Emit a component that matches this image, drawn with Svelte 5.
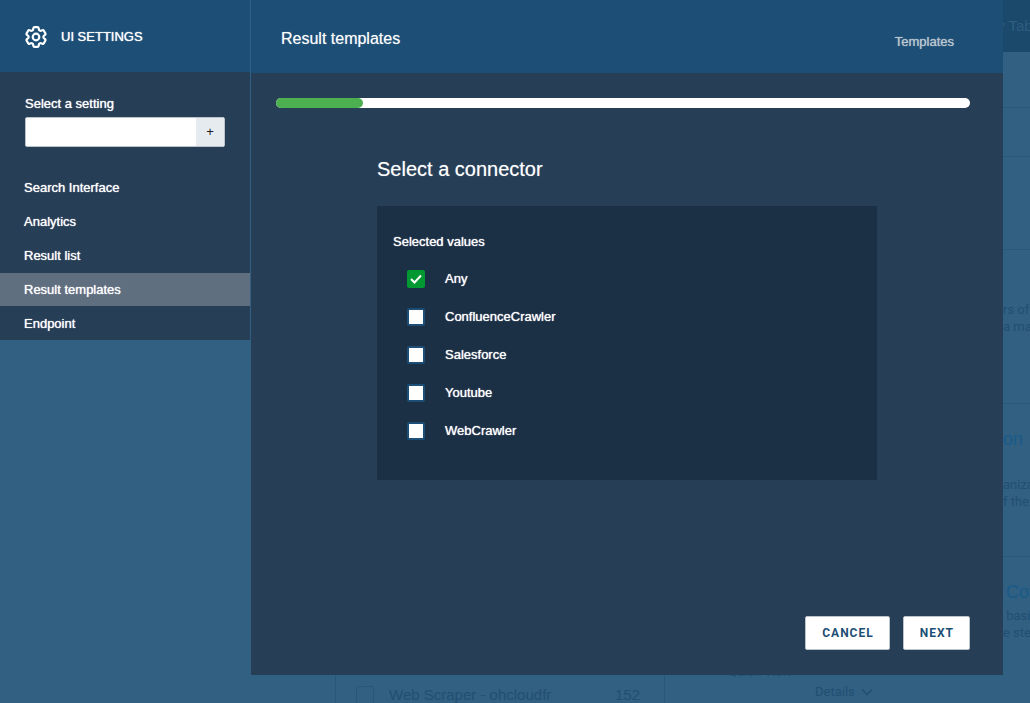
<script lang="ts">
  type Connector = { name: string; checked: boolean };

  const settings = ['Search Interface', 'Analytics', 'Result list', 'Result templates', 'Endpoint'];

  let activeSetting = $state('Result templates');
  let newSetting = $state('');
  let progress = $state(12.5);

  let connectors: Connector[] = $state([
    { name: 'Any', checked: true },
    { name: 'ConfluenceCrawler', checked: false },
    { name: 'Salesforce', checked: false },
    { name: 'Youtube', checked: false },
    { name: 'WebCrawler', checked: false }
  ]);
</script>

<div class="app">
  <!-- search page, dimmed behind the settings -->
  <div class="backdrop" aria-hidden="true">
    <div class="tabs"><span>y</span> Tab</div>
    <div class="search-page">
      <div class="facets">
        <div class="facet">
          <span class="facet-box"></span>
          <span>Web Scraper - ohcloudfr</span>
          <span class="count">152</span>
        </div>
      </div>
      <div class="actions">
        <div class="quick-view">Quick View</div>
        <div class="details">
          Details
          <svg width="12" height="8" viewBox="0 0 12 8" fill="none" stroke="currentColor" stroke-width="1.5">
            <path d="M1 1.5l5 5 5-5" />
          </svg>
        </div>
      </div>
      <div class="results">
        <div class="row toolbar"></div>
        <div class="row sort"></div>
        <div class="row summary"></div>
        <div class="row first"><p>rs of<br />a ma</p></div>
        <div class="row second">
          <h3>on</h3>
          <p>aniza<br />f the</p>
        </div>
        <div class="row third">
          <h3>Cov</h3>
          <p>&nbsp;basi<br />e ste</p>
        </div>
      </div>
    </div>
  </div>

  <div class="overlay">
    <aside class="sidebar">
      <header class="sidebar-header">
        <svg width="22" height="22" viewBox="2 2 20 20" fill="none" stroke="currentColor" stroke-width="2" stroke-linejoin="round">
          <path d="M9.594 3.94c.09-.542.56-.94 1.11-.94h2.593c.55 0 1.02.398 1.11.94l.213 1.281c.063.374.313.686.645.87.074.04.147.083.22.127.325.196.72.257 1.075.124l1.217-.456a1.125 1.125 0 0 1 1.37.49l1.296 2.247a1.125 1.125 0 0 1-.26 1.431l-1.003.827c-.293.241-.438.613-.43.992a7.723 7.723 0 0 1 0 .255c-.008.378.137.75.43.991l1.004.827c.424.35.534.955.26 1.43l-1.298 2.247a1.125 1.125 0 0 1-1.369.491l-1.217-.456c-.355-.133-.75-.072-1.076.124a6.47 6.47 0 0 1-.22.128c-.331.183-.581.495-.644.869l-.213 1.281c-.09.543-.56.94-1.11.94h-2.594c-.55 0-1.019-.398-1.11-.94l-.213-1.281c-.062-.374-.312-.686-.644-.87a6.52 6.52 0 0 1-.22-.127c-.325-.196-.72-.257-1.076-.124l-1.217.456a1.125 1.125 0 0 1-1.369-.49l-1.297-2.247a1.125 1.125 0 0 1 .26-1.431l1.004-.827c.292-.24.437-.613.43-.991a6.932 6.932 0 0 1 0-.255c.007-.38-.138-.751-.43-.992l-1.004-.827a1.125 1.125 0 0 1-.26-1.43l1.297-2.247a1.125 1.125 0 0 1 1.37-.491l1.216.456c.356.133.751.072 1.076-.124.072-.044.146-.086.22-.128.332-.183.582-.495.644-.869l.214-1.28Z" />
          <circle cx="12" cy="12" r="3" />
        </svg>
        <span>UI SETTINGS</span>
      </header>

      <div class="setting-field">
        <label for="setting">Select a setting</label>
        <div class="input-group">
          <input id="setting" type="text" bind:value={newSetting} />
          <button type="button" aria-label="Add setting">+</button>
        </div>
      </div>

      <nav>
        {#each settings as setting}
          <button
            type="button"
            class:active={setting === activeSetting}
            onclick={() => (activeSetting = setting)}
          >{setting}</button>
        {/each}
      </nav>
    </aside>

    <main class="panel">
      <header class="panel-header">
        <h1>Result templates</h1>
        <a href="#templates">Templates</a>
      </header>

      <div class="progress" role="progressbar" aria-label="Progress" aria-valuenow={progress}>
        <div class="progress-bar" style="width: {progress}%"></div>
      </div>

      <section class="step">
        <h2>Select a connector</h2>
        <fieldset>
          <legend>Selected values</legend>
          {#each connectors as connector}
            <label class="option">
              <span class="checkbox">
                <input type="checkbox" bind:checked={connector.checked} />
                {#if connector.checked}
                  <svg width="12" height="10" viewBox="0 0 12 10" fill="none" stroke="#fff" stroke-width="2">
                    <path d="M1 5l3.500 3.500L11 1.500" />
                  </svg>
                {/if}
              </span>
              {connector.name}
            </label>
          {/each}
        </fieldset>
      </section>

      <footer>
        <button type="button">CANCEL</button>
        <button type="button">NEXT</button>
      </footer>
    </main>
  </div>
</div>

<style>
  :global(body) {
    margin: 0;
  }

  .app {
    position: relative;
    min-height: 100vh;
    overflow: hidden;
    background: #316082;
    color: #fff;
    font-family: 'Liberation Sans', Arial, sans-serif;
    font-size: 13px;
    line-height: 16px;
  }

  .app * {
    box-sizing: border-box;
  }

  h1,
  h2,
  h3,
  p {
    margin: 0;
    font-weight: normal;
  }

  button,
  input {
    font: inherit;
  }

  button {
    cursor: pointer;
  }

  /* Dimmed page */
  .backdrop {
    position: absolute;
    inset: 0;
    display: flex;
    flex-direction: column;
    overflow: hidden;
    color: #214f73;
    white-space: nowrap;
  }

  .tabs {
    height: 52px;
    flex: none;
    padding: 18px 0 0 997px;
    background: #1b496b;
    color: #2d5d80;
    font-size: 15px;
  }

  .search-page {
    flex: 1;
    display: grid;
    grid-template-columns: 330px 338px 1fr;
    margin-left: 335px;
  }

  .facets {
    display: flex;
    align-items: flex-end;
    border: solid #2a587b;
    border-width: 0 1px;
  }

  .facet {
    flex: 1;
    display: flex;
    align-items: center;
    gap: 15px;
    height: 16px;
    padding: 0 24px 0 20px;
    font-size: 15px;
  }

  .facet-box {
    width: 18px;
    height: 18px;
    border: 1px solid #28577a;
    border-radius: 2px;
  }

  .count {
    margin-left: auto;
  }

  .actions {
    display: flex;
    flex-direction: column;
    justify-content: flex-end;
    font-family: Roboto, sans-serif;
    font-size: 13px;
  }

  .quick-view {
    padding: 0 0 4px 63px;
  }

  .details {
    display: flex;
    align-items: center;
    gap: 6px;
    padding: 0 0 3px 150px;
  }

  .row {
    border-bottom: 1px solid #2a587b;
    font-family: Roboto, sans-serif;
    font-size: 13px;
    line-height: 17px;
  }

  .row h3 {
    color: #1b5a88;
    font-family: 'Liberation Sans', Arial, sans-serif;
    font-size: 18px;
    line-height: 22px;
  }

  .toolbar {
    height: 56px;
  }

  .sort {
    height: 49px;
  }

  .summary {
    height: 93px;
  }

  .first {
    height: 154px;
    padding-top: 51px;
  }

  .second {
    height: 153px;
    padding-top: 24px;
  }

  .second p {
    padding-top: 26px;
  }

  .third {
    padding-top: 24px;
    border-bottom: 0;
  }

  .third h3 {
    padding-left: 3px;
  }

  .third p {
    padding-top: 4px;
  }

  /* Settings overlay */
  .overlay {
    position: relative;
    display: flex;
    align-items: flex-start;
    gap: 1px;
    min-height: 100vh;
    padding: 0 27px 28px 0;
  }

  .overlay::before {
    content: '';
    position: absolute;
    top: 0;
    left: 0;
    width: 251px;
    height: 100%;
    background: #316082;
  }

  .sidebar {
    position: relative;
    flex: none;
    width: 250px;
    background: #263e56;
    text-shadow: 0 0 1px #fff;
  }

  .sidebar-header {
    display: flex;
    align-items: center;
    gap: 14px;
    height: 72px;
    padding: 1px 25px 0;
    background: #1d4f76;
    font-size: 13px;
  }

  .setting-field {
    padding: 24px 25px;
  }

  .setting-field label {
    display: block;
    margin-bottom: 5px;
  }

  .input-group {
    display: flex;
    height: 30px;
    border: 1px solid #bcc3ca;
    border-radius: 2px;
    background: #fff;
  }

  .input-group input {
    flex: 1;
    min-width: 0;
    padding: 0 8px;
    border: 0;
    background: none;
  }

  .input-group button {
    width: 28px;
    padding: 0;
    border: 0;
    background: #e6ebef;
    color: #1b1f24;
  }

  nav {
    display: flex;
    flex-direction: column;
    gap: 1px;
  }

  nav button {
    height: 33px;
    padding: 0 24px;
    border: 0;
    background: none;
    color: inherit;
    text-align: left;
    text-shadow: inherit;
  }

  nav button.active {
    background: #5f6f80;
  }

  .panel {
    position: relative;
    flex: 1;
    display: flex;
    flex-direction: column;
    align-self: stretch;
    background: #263e56;
  }

  .panel-header {
    display: flex;
    align-items: center;
    justify-content: space-between;
    height: 73px;
    padding: 4px 49px 0 30px;
    background: #1d4f76;
  }

  .panel-header h1 {
    font-size: 16px;
    line-height: 20px;
    text-shadow: 0 0 1px rgba(255, 255, 255, 0.5);
  }

  .panel-header a {
    padding-top: 6px;
    color: #b9c5cf;
    text-decoration: none;
    text-shadow: 0 0 1px #b9c5cf;
  }

  .progress {
    height: 10px;
    margin: 25px 33px 0 25px;
    border-radius: 5px;
    background: #fff;
  }

  .progress-bar {
    height: 100%;
    border-radius: 5px;
    background: #4caf50;
  }

  .step {
    width: 500px;
    margin: 48px auto 0;
  }

  .step h2 {
    font-size: 20px;
    line-height: 26px;
    text-shadow: 0 0 1px rgba(255, 255, 255, 0.5);
  }

  fieldset {
    display: flex;
    flex-direction: column;
    gap: 20px;
    min-width: 0;
    margin: 24px 0 0;
    padding: 28px 16px 40px;
    border: 0;
    background: #1b3045;
    text-shadow: 0 0 1px #fff;
  }

  legend {
    float: left;
    padding: 0;
  }

  .option {
    display: flex;
    align-items: center;
    gap: 20px;
    height: 18px;
    padding-left: 14px;
    cursor: pointer;
  }

  .checkbox {
    display: grid;
    place-items: center;
  }

  .checkbox input,
  .checkbox svg {
    grid-area: 1 / 1;
  }

  .checkbox svg {
    pointer-events: none;
  }

  .checkbox input {
    appearance: none;
    width: 18px;
    height: 18px;
    margin: 0;
    border: 2px solid #1d4f76;
    border-radius: 2px;
    background: #fff;
  }

  .checkbox input:checked {
    border-color: #009830;
    background: #009830;
  }

  footer {
    display: flex;
    justify-content: flex-end;
    gap: 13px;
    margin-top: auto;
    padding: 24px 33px 25px;
  }

  footer button {
    height: 34px;
    padding: 0 15px 0 16px;
    border: 1px solid #bcc3ca;
    border-radius: 2px;
    background: #fff;
    color: #1d4f76;
    font-family: Roboto, sans-serif;
    font-size: 12px;
    font-weight: bold;
    letter-spacing: 1px;
  }
</style>
